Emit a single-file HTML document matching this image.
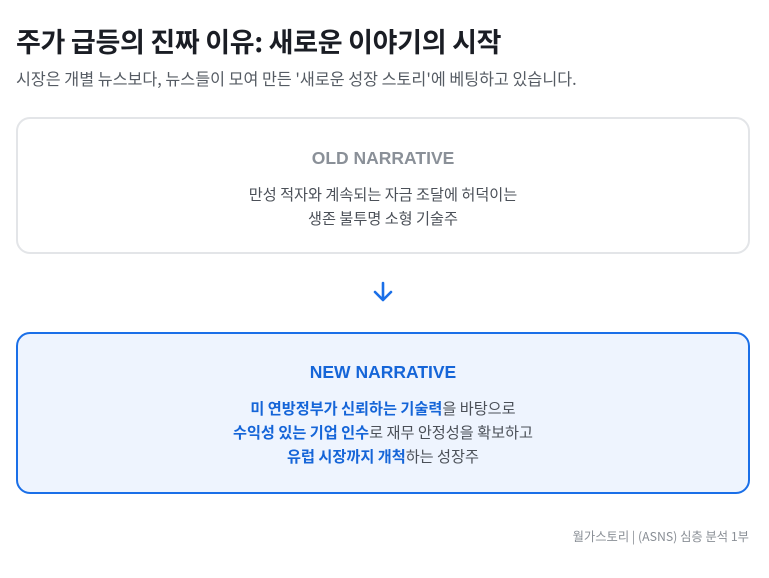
<!DOCTYPE html>
<html><head><meta charset="utf-8"><style>
body{margin:0;width:769px;height:578px;background:#fff;font-family:"Liberation Sans","Noto Sans CJK KR",sans-serif;position:relative;overflow:hidden}
.abs{position:absolute}
h1{position:absolute;left:16px;top:21px;margin:0;font-size:27px;font-weight:700;color:#1a1d24;letter-spacing:-0.3px;font-family:"Noto Sans CJK KR",sans-serif}
.sub{left:16px;top:66px;font-size:16.2px;color:#555b63;font-family:"Noto Sans CJK KR",sans-serif}
.box{position:absolute;left:16px;width:734px;box-sizing:border-box;border-radius:14px;text-align:center;font-family:"Noto Sans CJK KR",sans-serif}
.old{top:117px;height:137px;border:2px solid #e3e5e8;background:#fff}
.new{top:332px;height:162px;border:2px solid #1a6fe8;background:#eef4fe}
.t{font-weight:700;font-size:17.5px;font-family:"Liberation Sans","Noto Sans CJK KR",sans-serif}
.p{font-size:15.2px;line-height:24px;color:#4b5058}
b{color:#1565d8}
</style></head><body>
<h1>주가 급등의 진짜 이유: 새로운 이야기의 시작</h1>
<div class="abs sub">시장은 개별 뉴스보다, 뉴스들이 모여 만든 '새로운 성장 스토리'에 베팅하고 있습니다.</div>
<div class="box old"><div class="t" style="color:#8a9098;margin-top:29px">OLD NARRATIVE</div><div class="p" style="margin-top:13px">만성 적자와 계속되는 자금 조달에 허덕이는<br>생존 불투명 소형 기술주</div></div>
<svg class="abs" style="left:371px;top:280px" width="24" height="24" viewBox="0 0 24 24"><path d="M12 3v17M4 12l8 8 8-8" fill="none" stroke="#1a6fe8" stroke-width="2.6" stroke-linecap="round" stroke-linejoin="round"/></svg>
<div class="box new"><div class="t" style="color:#1565d8;margin-top:28px">NEW NARRATIVE</div><div class="p" style="margin-top:13px"><b>미 연방정부가 신뢰하는 기술력</b>을 바탕으로<br><b>수익성 있는 기업 인수</b>로 재무 안정성을 확보하고<br><b>유럽 시장까지 개척</b>하는 성장주</div></div>
<div class="abs" style="right:20px;top:527px;font-size:12.3px;color:#8a8f96;font-family:'Noto Sans CJK KR',sans-serif">월가스토리 | (ASNS) 심층 분석 1부</div>
</body></html>
